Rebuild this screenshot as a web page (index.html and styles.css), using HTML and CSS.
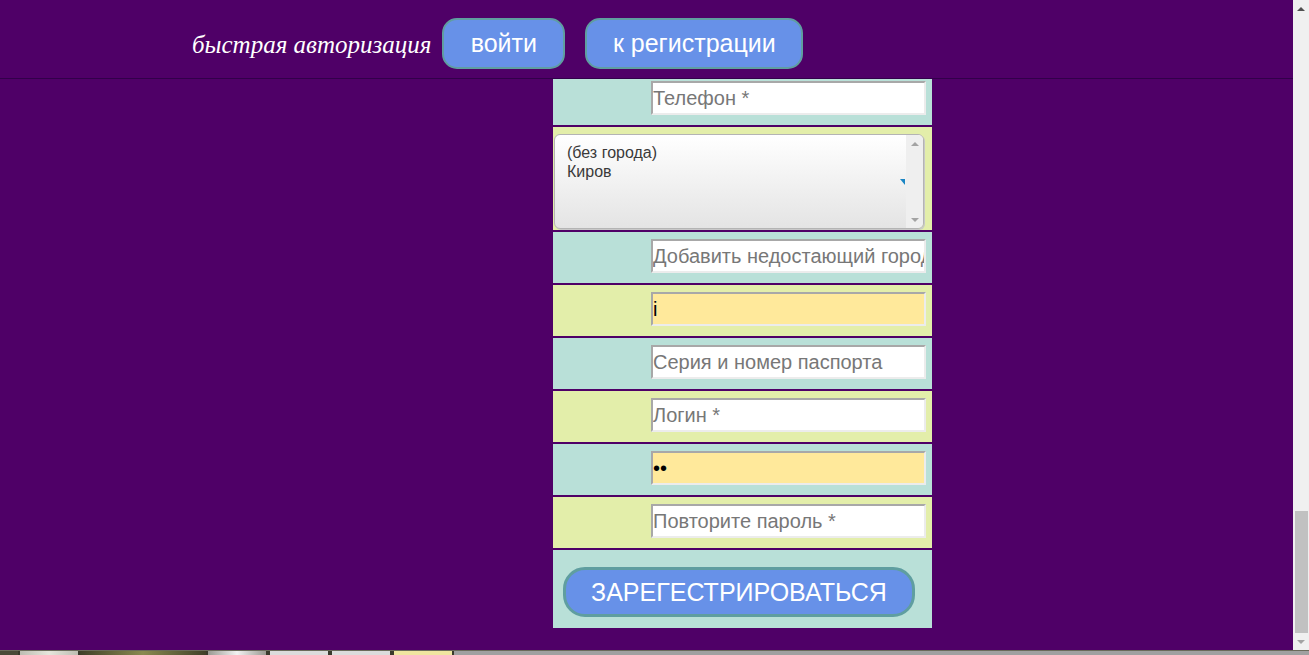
FILE: index.html
```html
<!DOCTYPE html>
<html lang="ru">
<head>
<meta charset="utf-8">
<title>Регистрация</title>
<link rel="stylesheet" href="styles.css">
</head>
<body>
<div class="screen">
  <div class="viewport">
    <div class="page">
      <header class="topbar">
        <span class="auth-title">быстрая авторизация</span>
        <button class="btn btn-login" type="button">войти</button>
        <button class="btn btn-reg" type="button">к регистрации</button>
      </header>
      <div class="content">
        <form class="regform">
          <div class="row teal"><input class="field" type="text" placeholder="Телефон *"></div>
          <div class="row yellow row-select">
            <div class="listbox">
              <div class="options">
                <div class="opt">(без города)</div>
                <div class="opt">Киров</div>
                <span class="corner"></span>
              </div>
              <div class="lb-scroll">
                <span class="lb-up"></span>
                <span class="lb-down"></span>
              </div>
            </div>
          </div>
          <div class="row teal"><input class="field" type="text" placeholder="Добавить недостающий город"></div>
          <div class="row yellow"><input class="field filled" type="text" value="i"></div>
          <div class="row teal"><input class="field" type="text" placeholder="Серия и номер паспорта"></div>
          <div class="row yellow"><input class="field" type="text" placeholder="Логин *"></div>
          <div class="row teal"><input class="field filled" type="password" value="ab"></div>
          <div class="row yellow"><input class="field" type="password" placeholder="Повторите пароль *"></div>
          <div class="row teal row-submit"><button class="btn-submit" type="button">ЗАРЕГЕСТРИРОВАТЬСЯ</button></div>
        </form>
      </div>
    </div>
    <div class="scrollbar">
      <div class="sb-btn"><span class="sb-up"></span></div>
      <div class="sb-track"><div class="sb-thumb"></div></div>
      <div class="sb-btn"><span class="sb-down"></span></div>
    </div>
  </div>
  <div class="taskbar">
    <span class="tb tb-a"></span>
    <span class="tb tb-b"></span>
    <span class="tb tb-c"></span>
    <span class="tb tb-d"></span>
    <span class="tb tb-e"></span>
    <span class="tb tb-e"></span>
    <span class="tb tb-f"></span>
    <span class="tb tb-g"></span>
  </div>
</div>
</body>
</html>
```

FILE: styles.css
```css
* { box-sizing: border-box; }

html, body {
  margin: 0;
  padding: 0;
  background: #4f0067;
  font-family: "Liberation Sans", Arial, sans-serif;
}

.screen {
  width: 1309px;
  height: 655px;
  display: flex;
  flex-direction: column;
  overflow: hidden;
}

.viewport {
  height: 650px;
  display: flex;
}

.page {
  flex: 1;
  min-width: 0;
  display: flex;
  flex-direction: column;
}

/* header */
.topbar {
  height: 79px;
  flex: none;
  border-bottom: 1px solid #32004a;
  display: flex;
  align-items: center;
  padding: 18px 0 9px 192px;
}

.auth-title {
  font-family: "Liberation Serif", "Times New Roman", serif;
  font-style: italic;
  font-size: 25px;
  color: #ffffff;
  margin-right: 11px;
  margin-top: 2px;
}

.btn {
  height: 51px;
  padding: 0 20px;
  border: 2px solid #5f9ea0;
  border-radius: 15px;
  background: #6791e8;
  color: #ffffff;
  font-family: "Liberation Sans", Arial, sans-serif;
  font-size: 25px;
  line-height: 1;
}

.btn-login { width: 123px; margin-right: 20px; }
.btn-reg { width: 218px; }

/* form */
.content {
  flex: 1;
  overflow: hidden;
  padding-left: 553px;
}

.regform {
  width: 379px;
  margin-top: -5px;
  display: flex;
  flex-direction: column;
  gap: 2px;
}

.row {
  height: 51px;
  padding: 7px 6px 0 98px;
}

.teal { background: #b9e0d8; }
.yellow { background: #e3eeaa; }

.field {
  display: block;
  width: 275px;
  height: 34px;
  margin: 0;
  padding: 0;
  border: 2px solid;
  border-color: #a8a8a8 #ececec #ececec #a8a8a8;
  background: #ffffff;
  color: #000000;
  font-family: "Liberation Sans", Arial, sans-serif;
  font-size: 20px;
  outline: none;
}

.field::placeholder { color: #777777; opacity: 1; }

.field.filled { background: #ffe99b; }

/* listbox */
.row-select {
  height: 103px;
  padding: 7px 0 0 1px;
}

.listbox {
  width: 370px;
  height: 95px;
  display: flex;
  border: 1px solid #b4b4b4;
  border-radius: 6px;
  background: linear-gradient(#ffffff, #e4e4e4);
  box-shadow: 1px 1px 0 #c8c8c8;
  overflow: hidden;
}

.options {
  flex: 1;
  position: relative;
  padding: 8px 0 0 12px;
  font-size: 16px;
  line-height: 19px;
  color: #3a3a3a;
}

.corner {
  position: absolute;
  right: 1px;
  top: 44px;
  width: 0;
  height: 0;
  border-top: 6px solid #1b86c4;
  border-left: 5px solid transparent;
}

.lb-scroll {
  width: 17px;
  background: #efefef;
  display: flex;
  flex-direction: column;
  justify-content: space-between;
  align-items: center;
  padding: 7px 0 6px;
}

.lb-up {
  width: 0; height: 0;
  border-left: 4px solid transparent;
  border-right: 4px solid transparent;
  border-bottom: 4px solid #a3a3a3;
}

.lb-down {
  width: 0; height: 0;
  border-left: 4px solid transparent;
  border-right: 4px solid transparent;
  border-top: 4px solid #a3a3a3;
}

/* submit */
.row-submit {
  height: 78px;
  padding: 17px 0 0 10px;
}

.btn-submit {
  display: block;
  width: 352px;
  height: 50px;
  border: 3px solid #5f9ea0;
  border-radius: 22px;
  background: #6791e8;
  color: #ffffff;
  font-family: "Liberation Sans", Arial, sans-serif;
  font-size: 25px;
  padding: 0;
}

/* window scrollbar */
.scrollbar {
  width: 16px;
  background: #f0f0f0;
  display: flex;
  flex-direction: column;
}

.sb-btn {
  height: 17px;
  display: flex;
  align-items: center;
  justify-content: center;
}

.sb-up {
  width: 0; height: 0;
  border-left: 4px solid transparent;
  border-right: 4px solid transparent;
  border-bottom: 4px solid #505050;
}

.sb-down {
  width: 0; height: 0;
  border-left: 4px solid transparent;
  border-right: 4px solid transparent;
  border-top: 4px solid #a3a3a3;
}

.sb-track {
  flex: 1;
  padding: 494px 1px 0 2px;
}

.sb-thumb {
  height: 122px;
  background: #c1c1c1;
}

/* taskbar sliver */
.taskbar {
  height: 5px;
  display: flex;
  gap: 2px;
  background: #3a3a2c;
  border-top: 1px solid #6a6a5a;
}

.tb { height: 100%; }
.tb-a { width: 18px; background: #4a4a38; }
.tb-b { width: 58px; background: linear-gradient(90deg, #bdbdb2, #e6e6dc, #bdbdb2); }
.tb-c { width: 126px; background: linear-gradient(90deg, #404028, #8a8a50, #404028); }
.tb-d { width: 58px; background: linear-gradient(90deg, #9a9a92, #f2f2f2, #9a9a92); }
.tb-e { width: 58px; background: #dcdcdc; margin-left: 2px; }
.tb-f { width: 58px; background: #f0e6a0; margin-left: 2px; }
.tb-g { flex: 1; background: #a0a0a0; }
```
